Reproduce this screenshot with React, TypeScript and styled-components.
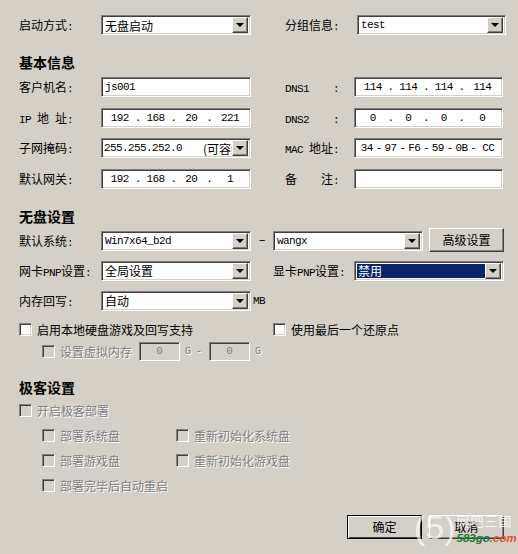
import styled, { createGlobalStyle } from 'styled-components';

const GlobalStyle = createGlobalStyle`
  html, body {
    margin: 0;
    padding: 0;
    background: #d4d0c8;
  }
`;

const Arrow = () => (
  <ArrowButton>
    <ArrowGlyph />
  </ArrowButton>
);

const Combo: React.FC<{ value: string; mono?: boolean; selected?: boolean }> = ({
  value,
  mono,
  selected,
}) => (
  <ComboBox>
    <ComboValue $mono={mono} $selected={selected}>
      {value}
    </ComboValue>
    <Arrow />
  </ComboBox>
);

const Ip: React.FC<{ parts: string[]; sep?: string }> = ({ parts, sep = '.' }) => (
  <IpField>
    {parts.map((part, i) => (
      <IpPart key={i}>
        <IpNum>{part}</IpNum>
        {i < parts.length - 1 && <IpSep>{sep}</IpSep>}
      </IpPart>
    ))}
  </IpField>
);

const Check: React.FC<{ label: string; disabled?: boolean }> = ({ label, disabled }) => (
  <CheckWrap>
    <CheckBox $disabled={disabled} />
    <CheckLabel $disabled={disabled}>{label}</CheckLabel>
  </CheckWrap>
);

export default function App() {
  return (
    <Page>
      <GlobalStyle />
      <TopGrid>
        <Label>
          启动方式<Latin>:</Latin>
        </Label>
        <Combo value="无盘启动" />
        <Label>
          分组信息<Latin>:</Latin>
        </Label>
        <Combo value="test" mono />
      </TopGrid>

      <Heading>基本信息</Heading>
      <InfoGrid>
        <Label>
          客户机名<Latin>:</Latin>
        </Label>
        <TextField>
          <Latin>js001</Latin>
        </TextField>
        <Label>
          <Latin>DNS1</Latin>
          <Colon>:</Colon>
        </Label>
        <Ip parts={['114', '114', '114', '114']} />

        <Label>
          <Latin>IP </Latin>地<Latin> </Latin>址<Latin>:</Latin>
        </Label>
        <Ip parts={['192', '168', '20', '221']} />
        <Label>
          <Latin>DNS2</Latin>
          <Colon>:</Colon>
        </Label>
        <Ip parts={['0', '0', '0', '0']} />

        <Label>
          子网掩码<Latin>:</Latin>
        </Label>
        <ComboBox>
          <MaskValue>
            <Latin>255.255.252.0</Latin>
            <MaskNote>(可容纳</MaskNote>
          </MaskValue>
          <Arrow />
        </ComboBox>
        <Label>
          <Latin>MAC </Latin>地址<Latin>:</Latin>
        </Label>
        <Ip parts={['34', '97', 'F6', '59', '0B', 'CC']} sep="-" />

        <Label>
          默认网关<Latin>:</Latin>
        </Label>
        <Ip parts={['192', '168', '20', '1']} />
        <Label>
          备<Spacer />注<Latin>:</Latin>
        </Label>
        <TextField />
      </InfoGrid>

      <Heading $top={18}>无盘设置</Heading>
      <SystemRow>
        <Label>
          默认系统<Latin>:</Latin>
        </Label>
        <Combo value="Win7x64_b2d" mono />
        <Dash>–</Dash>
        <Combo value="wangx" mono />
        <RaisedButton>高级设置</RaisedButton>
      </SystemRow>
      <PnpRow>
        <Label>
          网卡<Latin>PNP</Latin>设置<Latin>:</Latin>
        </Label>
        <Combo value="全局设置" />
        <Label>
          显卡<Latin>PNP</Latin>设置<Latin>:</Latin>
        </Label>
        <Combo value="禁用" selected />
      </PnpRow>
      <MemoryRow>
        <Label>
          内存回写<Latin>:</Latin>
        </Label>
        <Combo value="自动" />
        <Unit>MB</Unit>
      </MemoryRow>

      <LocalRow>
        <Check label="启用本地硬盘游戏及回写支持" />
        <Check label="使用最后一个还原点" />
      </LocalRow>
      <VirtualRow>
        <Check label="设置虚拟内存" disabled />
        <SmallField>0</SmallField>
        <DisabledUnit>G</DisabledUnit>
        <DisabledUnit>-</DisabledUnit>
        <SmallField>0</SmallField>
        <DisabledUnit>G</DisabledUnit>
      </VirtualRow>

      <Heading $top={17}>极客设置</Heading>
      <GeekMain>
        <Check label="开启极客部署" disabled />
      </GeekMain>
      <GeekGrid>
        <Check label="部署系统盘" disabled />
        <Check label="重新初始化系统盘" disabled />
        <Check label="部署游戏盘" disabled />
        <Check label="重新初始化游戏盘" disabled />
        <Check label="部署完毕后自动重启" disabled />
      </GeekGrid>

      <Footer>
        <DialogButton $default>确定</DialogButton>
        <DialogButton>取消</DialogButton>
      </Footer>

      <Watermark>
        <WatermarkNum>(5)</WatermarkNum>
        <WatermarkText>
          <WatermarkName>网吧三国</WatermarkName>
          <WatermarkSite>
            583go<WatermarkDot>.com</WatermarkDot>
          </WatermarkSite>
        </WatermarkText>
      </Watermark>
    </Page>
  );
}

const Page = styled.div`
  position: relative;
  box-sizing: border-box;
  width: 518px;
  height: 554px;
  overflow: hidden;
  padding: 15px 0 0 19px;
  background: #d4d0c8;
  color: #000;
  font-family: 'Noto Sans CJK SC', 'Liberation Sans', sans-serif;
  font-size: 12px;
`;
const Label = styled.div`
  line-height: 20px;
  white-space: pre;
`;
const Latin = styled.span`
  font-family: 'Liberation Mono', monospace;
  font-size: 11px;
  letter-spacing: -0.6px;
`;
const Colon = styled(Latin)`
  margin-left: 24px;
`;
const Spacer = styled.span`
  display: inline-block;
  width: 24px;
`;
const TopGrid = styled.div`
  display: grid;
  grid-template-columns: 82px 150px 106px 149px;
  height: 20px;
  & > :nth-child(3) {
    margin-left: 34px;
  }
`;
const Heading = styled.h2<{ $top?: number }>`
  margin: ${(p) => p.$top ?? 18}px 0 6px;
  font-size: 14px;
  font-weight: 700;
  line-height: 18px;
`;
const InfoGrid = styled.div`
  display: grid;
  grid-template-columns: 82px 150px 103px 149px;
  grid-auto-rows: 20px;
  row-gap: 10.5px;
  & > :nth-child(4n + 3) {
    margin-left: 34px;
  }
`;
const Sunken = styled.div`
  box-sizing: border-box;
  height: 20px;
  border: 1px solid;
  border-color: #808080 #fff #fff #808080;
  box-shadow: inset 1px 1px 0 #404040, inset -1px -1px 0 #d4d0c8;
  background: #fff;
`;
const ComboBox = styled(Sunken)`
  display: flex;
  align-items: center;
  justify-content: space-between;
  padding: 2px;
  overflow: hidden;
`;
const ComboValue = styled.div<{ $mono?: boolean; $selected?: boolean }>`
  display: flex;
  flex: 1;
  align-self: stretch;
  align-items: center;
  min-width: 0;
  padding-left: 1px;
  background: ${(p) => (p.$selected ? '#0a246a' : 'transparent')};
  color: ${(p) => (p.$selected ? '#fff' : '#000')};
  font-family: ${(p) => (p.$mono ? "'Liberation Mono', monospace" : 'inherit')};
  font-size: ${(p) => (p.$mono ? '11px' : '12px')};
  letter-spacing: ${(p) => (p.$mono ? '-0.6px' : 'normal')};
  white-space: nowrap;
`;
const MaskValue = styled.div`
  display: flex;
  flex: 1;
  align-items: center;
  min-width: 0;
  overflow: hidden;
  white-space: nowrap;
`;
const MaskNote = styled.span`
  margin-left: 21px;
`;
const ArrowButton = styled.div`
  display: flex;
  flex: none;
  align-items: center;
  justify-content: center;
  box-sizing: border-box;
  width: 16px;
  height: 16px;
  border: 1px solid;
  border-color: #fff #404040 #404040 #fff;
  box-shadow: inset -1px -1px 0 #808080;
  background: #d4d0c8;
`;
const ArrowGlyph = styled.div`
  width: 0;
  height: 0;
  border-style: solid;
  border-width: 4px 4px 0;
  border-color: #000 transparent transparent;
`;
const TextField = styled(Sunken)`
  display: flex;
  align-items: center;
  padding-left: 3px;
`;
const IpField = styled(Sunken)`
  display: flex;
  align-items: center;
  padding: 0 2px 0 3px;
  font-family: 'Liberation Mono', monospace;
  font-size: 11px;
  letter-spacing: -0.6px;
`;
const IpPart = styled.div`
  display: flex;
  flex: 1;
  align-items: center;
`;
const IpNum = styled.span`
  flex: 1;
  text-align: center;
`;
const IpSep = styled.span`
  flex: none;
`;
const SystemRow = styled.div`
  display: grid;
  grid-template-columns: 82px 150px 22px 150px 81px;
  align-items: start;
  height: 20px;
  margin-top: 0.5px;
`;
const Dash = styled.div`
  font-family: 'Liberation Mono', monospace;
  font-size: 12px;
  line-height: 20px;
  text-align: center;
`;
const RaisedButton = styled.div`
  display: flex;
  align-items: center;
  justify-content: center;
  box-sizing: border-box;
  width: 75px;
  height: 24px;
  margin: -3px 0 0 6px;
  border: 1px solid;
  border-color: #fff #404040 #404040 #fff;
  box-shadow: inset -1px -1px 0 #808080;
  background: #d4d0c8;
`;
const PnpRow = styled.div`
  display: grid;
  grid-template-columns: 82px 150px 103px 150px;
  grid-auto-rows: 20px;
  margin-top: 10px;
  & > :nth-child(3) {
    margin-left: 22px;
  }
`;
const MemoryRow = styled.div`
  display: grid;
  grid-template-columns: 82px 150px auto;
  justify-content: start;
  grid-auto-rows: 20px;
  margin-top: 10px;
`;
const Unit = styled.div`
  display: flex;
  align-items: center;
  margin-left: 2px;
  font-family: 'Liberation Mono', monospace;
  font-size: 11px;
  letter-spacing: -0.6px;
`;
const LocalRow = styled.div`
  display: grid;
  grid-template-columns: 254px auto;
  height: 14px;
  margin-top: 10px;
`;
const CheckWrap = styled.div`
  display: flex;
  align-items: center;
  white-space: nowrap;
`;
const CheckBox = styled.div<{ $disabled?: boolean }>`
  flex: none;
  box-sizing: border-box;
  width: 13px;
  height: 13px;
  margin-right: 5px;
  border: 1px solid;
  border-color: #808080 #fff #fff #808080;
  box-shadow: inset 1px 1px 0 #404040, inset -1px -1px 0 #d4d0c8;
  background: ${(p) => (p.$disabled ? '#d4d0c8' : '#fff')};
`;
const CheckLabel = styled.span<{ $disabled?: boolean }>`
  color: ${(p) => (p.$disabled ? '#808080' : '#000')};
  text-shadow: ${(p) => (p.$disabled ? '1px 1px 0 #fff' : 'none')};
`;
const VirtualRow = styled.div`
  display: flex;
  align-items: center;
  height: 19px;
  margin: 7px 0 0 23px;
`;
const SmallField = styled(Sunken)`
  display: flex;
  align-items: center;
  justify-content: center;
  width: 41px;
  height: 19px;
  margin-left: 7px;
  background: #d4d0c8;
  color: #808080;
  font-family: 'Liberation Mono', monospace;
  font-size: 11px;
`;
const DisabledUnit = styled.span`
  margin-left: 5px;
  color: #808080;
  font-family: 'Liberation Mono', monospace;
  font-size: 10px;
  text-shadow: 1px 1px 0 #fff;
`;
const GeekMain = styled.div`
  height: 14px;
  margin-top: 6px;
`;
const GeekGrid = styled.div`
  display: grid;
  grid-template-columns: 134px auto;
  justify-content: start;
  grid-auto-rows: 14px;
  row-gap: 11px;
  margin: 13px 0 0 23px;
`;
const Footer = styled.div`
  display: flex;
  gap: 7px;
  margin: 22px 0 0 328px;
`;
const DialogButton = styled.div<{ $default?: boolean }>`
  display: flex;
  align-items: center;
  justify-content: center;
  box-sizing: border-box;
  width: 75px;
  height: 24px;
  border: 1px solid;
  border-color: ${(p) => (p.$default ? '#000' : '#fff #404040 #404040 #fff')};
  box-shadow: ${(p) =>
    p.$default
      ? 'inset 1px 1px 0 #fff, inset -1px -1px 0 #404040'
      : 'inset -1px -1px 0 #808080'};
  background: #d4d0c8;
`;
const Watermark = styled.div`
  position: absolute;
  top: 508px;
  left: 414px;
  display: flex;
  gap: 1px;
  pointer-events: none;
`;
const WatermarkNum = styled.div`
  color: rgba(255, 255, 255, 0.7);
  font-family: 'Liberation Sans', sans-serif;
  font-size: 34px;
  line-height: 38px;
`;
const WatermarkText = styled.div`
  display: flex;
  flex-direction: column;
  gap: 2px;
  padding-top: 5px;
`;
const WatermarkName = styled.div`
  color: rgba(255, 255, 255, 0.8);
  font-size: 13px;
  line-height: 16px;
  letter-spacing: 1px;
`;
const WatermarkSite = styled.div`
  color: #1a7a33;
  font-family: 'Liberation Sans', sans-serif;
  font-size: 11.5px;
  font-style: italic;
  font-weight: 700;
  line-height: 14px;
`;
const WatermarkDot = styled.span`
  color: #e8502a;
`;
